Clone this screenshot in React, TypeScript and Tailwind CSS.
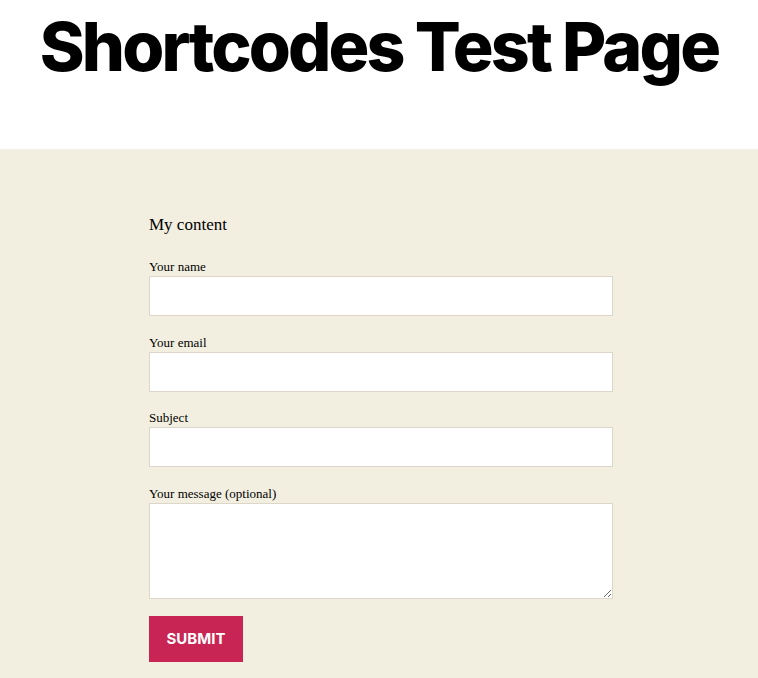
const fields = [
  { label: 'Your name', type: 'text' },
  { label: 'Your email', type: 'email' },
  { label: 'Subject', type: 'text' },
];

export default function App() {
  return (
    <div className="min-h-screen bg-[#f2efe0]">
      <header className="bg-white h-[149px] pt-[4px] text-center">
        <h1 className="font-['Inter',sans-serif] text-[68px] font-extrabold leading-[1.25] tracking-[-0.0415em] text-black">
          Shortcodes Test Page
        </h1>
      </header>

      <main className="pt-[64px] pb-[20px]">
        <div className="ml-[149px] w-[464px] font-['Liberation_Serif',serif] text-black">
          <p className="text-[17px] leading-[24px] mb-[24px]">My content</p>

          <form className="flex flex-col gap-[20.67px]" onSubmit={(e) => e.preventDefault()}>
            {fields.map((f) => (
              <label key={f.label} className="block">
                <span className="block h-[15px] text-[13px] leading-[11px]">{f.label}</span>
                <input
                  type={f.type}
                  className="block w-full h-[40px] bg-white border border-[#dcd7ca] outline-none"
                />
              </label>
            ))}
            <label className="block">
              <span className="block h-[15px] text-[13px] leading-[11px]">Your message (optional)</span>
              <textarea className="block w-full h-[96px] bg-white border border-[#dcd7ca] outline-none" />
            </label>
          </form>

          <button
            type="submit"
            className="mt-[17px] h-[46px] w-[94px] bg-[#c82554] text-white font-['Inter',sans-serif] font-bold text-[15px] tracking-normal uppercase"
          >
            Submit
          </button>
        </div>
      </main>
    </div>
  );
}
